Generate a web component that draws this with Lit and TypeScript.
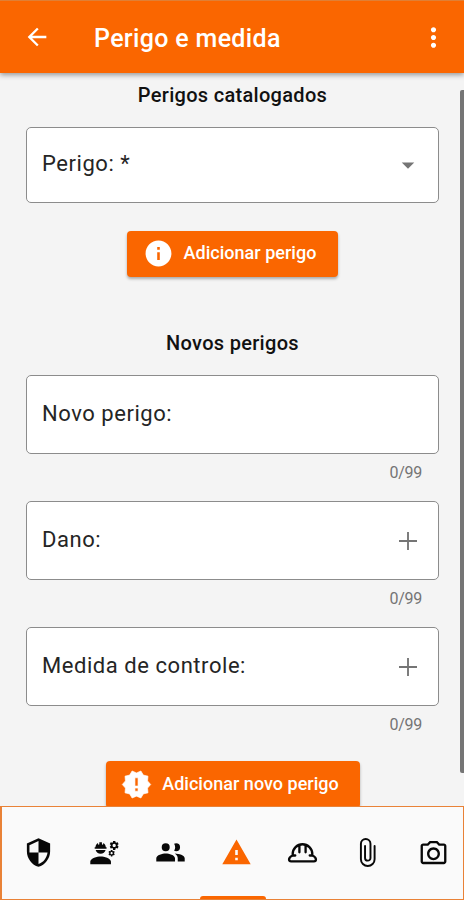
import { LitElement, html, css, svg } from "lit";
import { customElement, property } from "lit/decorators.js";

const icons: Record<string, unknown> = {
  back: svg`<path d="M20 11H7.83l5.59-5.59L12 4l-8 8 8 8 1.41-1.41L7.83 13H20v-2z"/>`,
  more: svg`<path d="M12 8c1.1 0 2-.9 2-2s-.9-2-2-2-2 .9-2 2 .9 2 2 2zm0 2c-1.1 0-2 .9-2 2s.9 2 2 2 2-.9 2-2-.9-2-2-2zm0 6c-1.1 0-2 .9-2 2s.9 2 2 2 2-.9 2-2-.9-2-2-2z"/>`,
  caret: svg`<path d="M7 10l5 5 5-5z"/>`,
  plus: svg`<path d="M19.200 12.750h-6.450v6.450h-1.500v-6.450H4.800v-1.500h6.450V4.800h1.500v6.450h6.450z"/>`,
  info: svg`<path d="M12 2C6.480 2 2 6.480 2 12s4.480 10 10 10 10-4.480 10-10S17.520 2 12 2zm1 15h-2v-6h2v6zm0-8h-2V7h2v2z"/>`,
  badge: svg`<path stroke="currentColor" stroke-width=".5" stroke-linejoin="round" d="M23 12l-2.440-2.780.340-3.680-3.610-.820-1.890-3.180L12 3 8.600 1.540 6.710 4.720l-3.610.810.340 3.680L1 12l2.440 2.780-.340 3.690 3.610.820 1.890 3.180L12 21l3.400 1.460 1.890-3.180 3.610-.820-.340-3.680L23 12zm-9.800 5.200h-2.400v-2.400h2.400v2.400zm0-4h-2.400V6.800h2.400v6.400z"/>`,
  shield: svg`<path d="M12 1L3 5v6c0 5.550 3.840 10.740 9 12 5.160-1.260 9-6.450 9-12V5l-9-4zm0 10.990h7c-.530 4.120-3.280 7.790-7 8.940V12H5V6.300l7-3.110v8.800z"/>`,
  engineer: svg`<path d="M9 15c-2.670 0-8 1.340-8 4v2h16v-2c0-2.660-5.330-4-8-4zM22.100 6.840c.010-.110.020-.220.020-.340 0-.120-.010-.230-.030-.340l.740-.580c.070-.050.080-.150.040-.220l-.700-1.210c-.040-.080-.140-.100-.210-.080l-.860.350c-.180-.140-.380-.250-.590-.340l-.130-.930c-.020-.090-.090-.150-.180-.150h-1.400c-.090 0-.160.060-.170.150l-.130.930c-.210.090-.410.210-.590.340l-.870-.350c-.080-.030-.170 0-.210.080l-.700 1.210c-.040.080-.030.170.040.220l.740.580c-.020.110-.030.230-.030.340 0 .110.010.230.030.340l-.740.580c-.070.050-.080.150-.040.220l.700 1.210c.040.080.140.100.210.080l.870-.350c.180.140.380.250.590.340l.130.930c.010.090.080.150.170.150h1.400c.090 0 .160-.060.170-.150l.130-.930c.210-.090.410-.210.590-.340l.870.350c.080.030.170 0 .210-.080l.700-1.210c.040-.080.030-.170-.040-.220l-.730-.580zm-2.600.910c-.690 0-1.250-.560-1.250-1.250s.560-1.250 1.250-1.250 1.250.560 1.250 1.250-.560 1.250-1.250 1.250zM19.920 11.680l-.500-.870c-.030-.060-.100-.080-.150-.060l-.620.250c-.130-.100-.270-.180-.420-.240l-.090-.660a.128.128 0 0 0-.130-.100h-1c-.060 0-.110.040-.120.110l-.090.660c-.150.060-.290.150-.420.240l-.620-.250c-.060-.020-.120 0-.150.060l-.500.870c-.030.060-.020.120.030.160l.530.410c-.010.080-.020.160-.020.240 0 .080.010.170.020.240l-.530.410c-.050.040-.060.110-.030.160l.500.870c.030.060.100.080.150.060l.620-.250c.130.100.270.180.420.240l.090.660c.010.070.060.110.120.110h1c.060 0 .120-.040.120-.110l.090-.660c.150-.060.290-.150.420-.240l.620.250c.060.020.120 0 .150-.060l.500-.870c.030-.060.020-.120-.030-.160l-.520-.410c.010-.080.020-.160.020-.240 0-.080-.010-.170-.020-.240l.530-.410c.050-.040.060-.110.040-.170zm-2.420 1.650c-.460 0-.830-.380-.830-.830 0-.460.380-.830.830-.830s.830.380.830.830c0 .460-.370.830-.830.830zM4.740 9h8.530c.270 0 .490-.220.490-.490v-.020a.490.490 0 0 0-.490-.490H13c0-1.480-.810-2.750-2-3.450v.950c0 .280-.220.500-.500.500s-.500-.220-.500-.500V4.140C9.680 4.060 9.350 4 9 4s-.680.060-1 .140V5.500c0 .280-.220.500-.500.500S7 5.780 7 5.500v-.950C5.810 5.250 5 6.520 5 8h-.260a.490.490 0 0 0-.490.490v.030c0 .260.220.480.490.480zM9 13c1.860 0 3.410-1.280 3.860-3H5.140c.450 1.720 2 3 3.860 3z"/>`,
  people: svg`<path d="M8.300 11a3.100 3.100 0 1 0 0-6.200 3.100 3.100 0 0 0 0 6.200zM8.300 12.800C5.800 12.800 1 14 1 16.500V19h14.500v-2.500c0-2.500-4.700-3.700-7.200-3.700zM16.300 11a3.100 3.100 0 1 0 0-6.200c-.550 0-1.050.140-1.500.380a5.300 5.300 0 0 1 0 5.440c.450.240.950.380 1.500.380zM15.300 12.850c1.250.850 2.300 2 2.300 3.650V19H23v-2.500c0-2.300-4.400-3.500-7.700-3.650z"/>`,
  warning: svg`<path d="M1 21h22L12 2 1 21zm12-3h-2v-2h2v2zm0-4h-2v-4h2v4z"/>`,
  helmet: svg`<g fill="none" stroke="currentColor" stroke-width="1.800" stroke-linecap="round" stroke-linejoin="round"><path d="M4.400 14.300v-1.100a7.600 7.600 0 0 1 15.200 0v1.100c1.800.700 2.800 1.900 2.800 3.200 0 .900-.600 1.400-1.500 1.400H3.100c-.900 0-1.500-.500-1.500-1.400 0-1.300 1-2.500 2.800-3.200zM4.400 14.300h2M17.600 14.300h2M9.600 6.300v5.500M14.400 6.300v5.500"/></g>`,
  clip: svg`<g fill="none" stroke="currentColor" stroke-width="1.500" stroke-linecap="round"><path d="M17.500 7v10.200a5.300 5.300 0 0 1-10.600 0V5.300a3.700 3.700 0 0 1 7.400 0v10.900a2.100 2.100 0 0 1-4.200 0V7"/></g>`,
  camera: svg`<path d="M20 5h-3.170L15 3H9L7.170 5H4c-1.100 0-2 .900-2 2v12c0 1.100.900 2 2 2h16c1.100 0 2-.900 2-2V7c0-1.100-.900-2-2-2zm.200 14.200H3.800V6.800h4.150l1.850-2h4.400l1.850 2h4.150v12.400zM12 8c-2.760 0-5 2.240-5 5s2.240 5 5 5 5-2.240 5-5-2.240-5-5-5zm0 8.200c-1.760 0-3.200-1.440-3.200-3.200s1.440-3.200 3.200-3.200 3.200 1.440 3.200 3.200-1.440 3.200-3.200 3.200z"/>`,
};

@customElement("app-icon")
class AppIcon extends LitElement {
  @property() name = "";
  static styles = css`
    :host { display: block; flex: none; width: 30px; height: 30px; }
    svg { display: block; width: 100%; height: 100%; fill: currentColor; }
  `;
  render() {
    return html`<svg viewBox="0 0 24 24">${icons[this.name]}</svg>`;
  }
}

@customElement("form-field")
class FormField extends LitElement {
  @property() label = "";
  @property() icon = "";
  @property() counter = "";
  static styles = css`
    :host { display: block; }
    .box {
      box-sizing: border-box; height: var(--box-height, 79px);
      border: 1px solid #8c8c8c; border-radius: 5px; background: #fff;
      display: flex; align-items: center; justify-content: space-between;
      padding: 0 15px 3px; color: #252525;
      font-size: 22px; letter-spacing: 0.550px;
    }
    .icon { color: #757575; margin-top: 3px; }
    .counter {
      height: 47px; box-sizing: border-box; padding: 9px 17px 0 0;
      text-align: right; font-size: 16px; line-height: 20px;
      letter-spacing: -0.300px; color: #757575;
    }
  `;
  render() {
    return html`
      <div class="box"><span>${this.label}</span>
        ${this.icon ? html`<app-icon class="icon" name=${this.icon}></app-icon>` : ""}
      </div>
      ${this.counter ? html`<div class="counter">${this.counter}</div>` : ""}
    `;
  }
}

const tabs = ["shield", "engineer", "people", "warning", "helmet", "clip", "camera"];

@customElement("app-root")
class AppRoot extends LitElement {
  static styles = css`
    :host {
      display: flex; flex-direction: column; position: relative;
      width: 464px; height: 900px; overflow: hidden; background: #f4f4f4;
      font-family: Roboto, sans-serif; color: #111;
    }
    .bar {
      flex: none; box-sizing: border-box; height: 72.500px; z-index: 1;
      display: flex; align-items: center; padding: 2px 15px 0 25px;
      border-top: 1px solid #e07f35;
      background: #fa6600; color: #fff;
      box-shadow: 0 2px 5px rgba(0, 0, 0, 0.38);
    }
    .back { width: 28px; height: 28px; margin: -2px 0 0 -2px; }
    .title { flex: 1; margin: 2px 0 0 43px; font-size: 25px; font-weight: 500; letter-spacing: 0.330px; }
    .menu { width: 31px; height: 31px; margin-top: -1px; }
    .content { flex: 1; min-height: 0; overflow: hidden; padding: 0 25px 0 26px; }
    h2 { margin: 0; text-align: center; font-size: 20px; line-height: 24px; font-weight: 500; letter-spacing: 0.3px; }
    .catalog { padding-top: 10px; }
    .select { --box-height: 76px; margin-top: 20.500px; }
    .row { display: flex; justify-content: center; }
    .button {
      box-sizing: border-box; height: 46.500px; border-radius: 4px; background: #fa6600; color: #fff;
      display: flex; align-items: center; justify-content: center; gap: 10px; padding-right: 6px;
      font-size: 18px; font-weight: 500; letter-spacing: 0.020px;
      box-shadow: 0 2px 3px rgba(0, 0, 0, 0.3);
    }
    .button app-icon { width: 31px; height: 31px; }
    .button span { margin-top: -2px; }
    .add { width: 211px; margin-top: 27.500px; }
    .add-new { width: 254px; margin-top: 8px; padding-right: 5px; }
    .new { padding-top: 54px; margin-bottom: 20px; }
    .nav {
      flex: none; box-sizing: border-box; height: 94px; display: flex;
      border: 1px solid #e98237; border-left-width: 2px; background: #fafafa; overflow: hidden;
    }
    .tab {
      flex: none; box-sizing: border-box; width: 65.900px; height: 93px;
      display: flex; flex-direction: column; align-items: center; justify-content: space-between;
      padding-top: 29.500px; color: #080808;
    }
    .tab app-icon { width: 31px; height: 31px; margin-left: 7px; }
    .active { color: #fa6600; }
    .indicator { width: 66px; height: 4px; border-radius: 3px 3px 0 0; background: #fa6600; }
    .scroll { position: absolute; right: 0; top: 90px; width: 4.500px; height: 683px; background: #757575; border-radius: 2px 0 0 2px; }
  `;
  render() {
    return html`
      <header class="bar">
        <app-icon class="back" name="back"></app-icon>
        <div class="title">Perigo e medida</div>
        <app-icon class="menu" name="more"></app-icon>
      </header>
      <main class="content">
        <h2 class="catalog">Perigos catalogados</h2>
        <form-field class="select" label="Perigo: *" icon="caret"></form-field>
        <div class="row"><div class="button add"><app-icon name="info"></app-icon><span>Adicionar perigo</span></div></div>
        <h2 class="new">Novos perigos</h2>
        <form-field label="Novo perigo:" counter="0/99"></form-field>
        <form-field label="Dano:" icon="plus" counter="0/99"></form-field>
        <form-field label="Medida de controle:" icon="plus" counter="0/99"></form-field>
        <div class="row"><div class="button add-new"><app-icon name="badge"></app-icon><span>Adicionar novo perigo</span></div></div>
      </main>
      <nav class="nav">
        ${tabs.map((t) => {
          const active = t === "warning";
          return html`<div class="tab ${active ? "active" : ""}">
            <app-icon name=${t}></app-icon>${active ? html`<div class="indicator"></div>` : ""}
          </div>`;
        })}
      </nav>
      <div class="scroll"></div>
    `;
  }
}
